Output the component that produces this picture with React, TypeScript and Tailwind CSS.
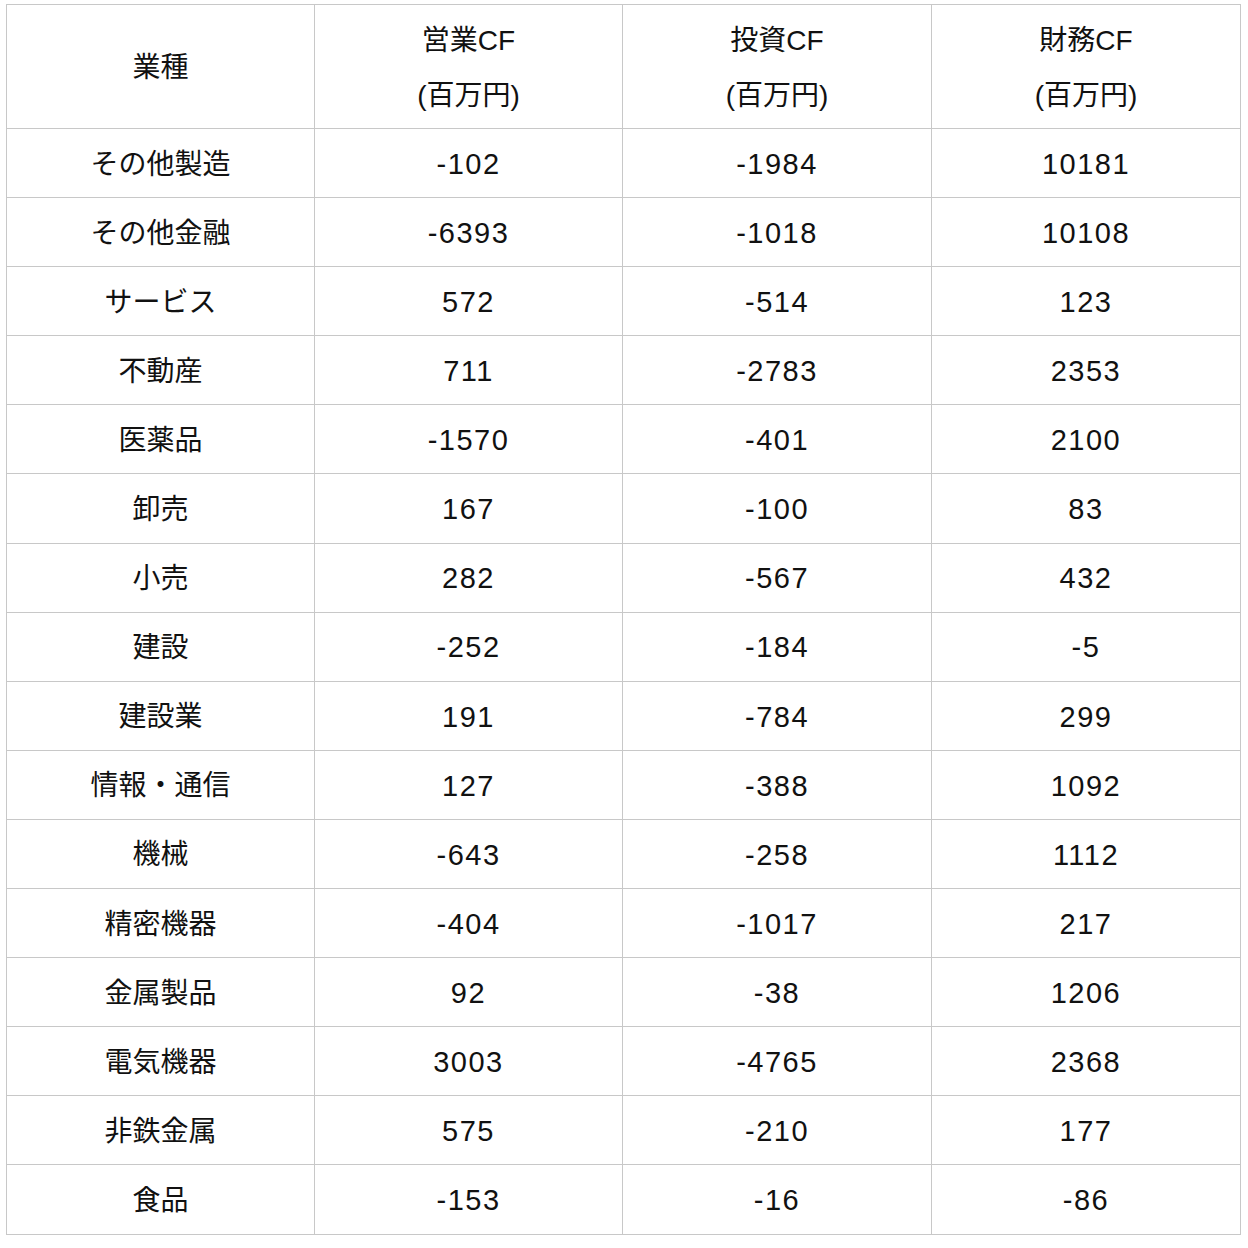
import React from "react";

const rows: [string, string, string, string][] = [
  ["その他製造", "-102", "-1984", "10181"],
  ["その他金融", "-6393", "-1018", "10108"],
  ["サービス", "572", "-514", "123"],
  ["不動産", "711", "-2783", "2353"],
  ["医薬品", "-1570", "-401", "2100"],
  ["卸売", "167", "-100", "83"],
  ["小売", "282", "-567", "432"],
  ["建設", "-252", "-184", "-5"],
  ["建設業", "191", "-784", "299"],
  ["情報・通信", "127", "-388", "1092"],
  ["機械", "-643", "-258", "1112"],
  ["精密機器", "-404", "-1017", "217"],
  ["金属製品", "92", "-38", "1206"],
  ["電気機器", "3003", "-4765", "2368"],
  ["非鉄金属", "575", "-210", "177"],
  ["食品", "-153", "-16", "-86"],
];

const headers = ["営業CF", "投資CF", "財務CF"];

export default function App() {
  return (
    <div
      className="w-[1248px] h-[1248px] bg-white pt-[4px] pl-[6px] text-[#111] text-[28px]"
      style={{ fontFamily: '"Liberation Sans", "Noto Sans CJK JP", sans-serif' }}
    >
      <table className="border-collapse table-fixed w-[1234px]">
        <colgroup>
          <col className="w-[308px]" />
          <col className="w-[308px]" />
          <col className="w-[309px]" />
          <col className="w-[309px]" />
        </colgroup>
        <thead>
          <tr className="h-[124px]">
            <th className="border-[1.5px] border-[#c8c8c8] font-normal text-center align-middle pt-[2px]">業種</th>
            {headers.map((h) => (
              <th key={h} className="border-[1.5px] border-[#c8c8c8] font-normal text-center align-middle leading-[55px] pt-[2px]">
                <div>{h}</div>
                <div>(百万円)</div>
              </th>
            ))}
          </tr>
        </thead>
        <tbody>
          {rows.map((r) => (
            <tr key={r[0]} className="h-[69.1px]">
              {r.map((c, i) =>
                i === 0 ? (
                  <td key={i} className="border-[1.5px] border-[#c8c8c8] text-center align-middle p-0 pt-[3px]">
                    {c}
                  </td>
                ) : (
                  <td key={i} className="border-[1.5px] border-[#c8c8c8] text-center align-middle p-0 pt-[3px] text-[29px] tracking-[1.5px]">
                    {c}
                  </td>
                )
              )}
            </tr>
          ))}
        </tbody>
      </table>
    </div>
  );
}
